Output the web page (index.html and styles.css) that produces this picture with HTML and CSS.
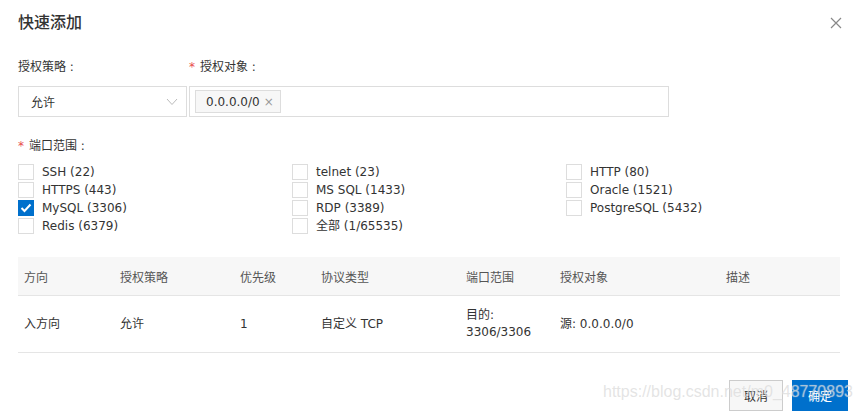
FILE: index.html
```html
<!doctype html>
<html lang="zh-CN">
  <head>
    <meta charset="UTF-8" />
    <meta name="viewport" content="width=device-width, initial-scale=1.0" />
    <title>快速添加</title>
    <link rel="stylesheet" href="styles.css">
  </head>
  <body>
    <div class="dialog">
      <div class="dialog-header">
        <h2>快速添加</h2>
        <button class="close-button" aria-label="关闭">
          <svg width="12" height="12" viewBox="0 0 12 12">
            <path d="M1 1L11 11M11 1L1 11" stroke="#888" stroke-width="1.2" fill="none" />
          </svg>
        </button>
      </div>

      <div class="form-row">
        <div class="field policy-field">
          <div class="field-label">授权策略 :</div>
          <div class="select">
            <span>允许</span>
            <svg width="12" height="8" viewBox="0 0 12 8">
              <path d="M1 1L6 6.5L11 1" stroke="#bbb" stroke-width="1" fill="none" />
            </svg>
          </div>
        </div>
        <div class="field target-field">
          <div class="field-label"><span class="required">*</span>授权对象 :</div>
          <div class="tag-input">
            <span class="tag">0.0.0.0/0 <span class="tag-close">×</span></span>
          </div>
        </div>
      </div>

      <div class="field-label port-label"><span class="required">*</span>端口范围 :</div>
      <div class="port-grid" id="portGrid"></div>

      <table class="rule-table">
        <colgroup>
          <col style="width: 96px" />
          <col style="width: 120px" />
          <col style="width: 81px" />
          <col style="width: 145px" />
          <col style="width: 94px" />
          <col style="width: 166px" />
          <col />
        </colgroup>
        <thead>
          <tr>
            <th>方向</th>
            <th>授权策略</th>
            <th>优先级</th>
            <th>协议类型</th>
            <th>端口范围</th>
            <th>授权对象</th>
            <th>描述</th>
          </tr>
        </thead>
        <tbody>
          <tr>
            <td>入方向</td>
            <td>允许</td>
            <td>1</td>
            <td>自定义 TCP</td>
            <td>目的:<br />3306/3306</td>
            <td>源: 0.0.0.0/0</td>
            <td></td>
          </tr>
        </tbody>
      </table>

      <div class="dialog-footer">
        <button class="btn">取消</button>
        <button class="btn btn-primary">确定</button>
      </div>

      <div class="watermark">https://blog.csdn.net/m0_48770893</div>
    </div>

    <script>
      // ports laid out column by column, like the console does
      const ports = [
        ["SSH (22)", "HTTPS (443)", "MySQL (3306)", "Redis (6379)"],
        ["telnet (23)", "MS SQL (1433)", "RDP (3389)", "全部 (1/65535)"],
        ["HTTP (80)", "Oracle (1521)", "PostgreSQL (5432)"],
      ];
      const checked = ["MySQL (3306)"];

      const grid = document.getElementById("portGrid");
      grid.innerHTML = ports
        .map(
          (col) => `
            <div class="port-col">
              ${col
                .map(
                  (name) => `
                  <label class="checkbox ${checked.includes(name) ? "checked" : ""}">
                    <span class="box">
                      <svg width="12" height="10" viewBox="0 0 12 10">
                        <path d="M1.5 5L4.5 8L10.5 1.5" stroke="#fff" stroke-width="2" fill="none" />
                      </svg>
                    </span>
                    <span>${name}</span>
                  </label>`,
                )
                .join("")}
            </div>`,
        )
        .join("");
    </script>
  </body>
</html>
```

FILE: styles.css
```css
body {
  font-family: "DejaVu Sans", "Noto Sans CJK SC", sans-serif;
  margin: 0;
  background: white;
  color: #333;
  font-size: 12px;
}

.dialog {
  position: relative;
  width: 860px;
  height: 418px;
  padding: 0 12px 0 18px;
  box-sizing: border-box;
  overflow: hidden;
}

.dialog-header {
  display: flex;
  justify-content: space-between;
  align-items: center;
  height: 46px;
}

.dialog-header h2 {
  margin: 0;
  font-size: 16px;
  font-weight: 500;
  line-height: 22px;
  color: #333;
}

.close-button {
  border: none;
  background: none;
  padding: 0;
  margin-right: 6px;
  cursor: pointer;
  display: flex;
}

.form-row {
  display: flex;
  gap: 2px;
  margin-top: 12px;
}

.field-label {
  line-height: 18px;
  height: 18px;
  margin-bottom: 10px;
}

.required {
  color: #e84c4c;
  margin-right: 5px;
}

.policy-field {
  width: 169px;
}

.select {
  height: 31px;
  box-sizing: border-box;
  border: 1px solid #ddd;
  display: flex;
  justify-content: space-between;
  align-items: center;
  padding: 0 8px 0 12px;
}

.target-field {
  width: 480px;
}

.tag-input {
  height: 31px;
  box-sizing: border-box;
  border: 1px solid #ddd;
  display: flex;
  align-items: center;
  padding-left: 5px;
}

.tag {
  height: 23px;
  box-sizing: border-box;
  border: 1px solid #ddd;
  background: #f7f7f7;
  padding: 0 6px 0 10px;
  display: flex;
  align-items: center;
  gap: 4px;
}

.tag-close {
  color: #999;
  font-size: 12px;
}

.port-label {
  margin-top: 20px;
  margin-bottom: 9px;
}

.port-grid {
  display: grid;
  grid-template-columns: 274px 274px 274px;
}

.port-col {
  display: flex;
  flex-direction: column;
  gap: 2px;
}

.checkbox {
  display: flex;
  align-items: center;
  gap: 8px;
  height: 16px;
  line-height: 16px;
}

.box {
  width: 16px;
  height: 16px;
  box-sizing: border-box;
  border: 1px solid #ddd;
  background: white;
  display: flex;
  align-items: center;
  justify-content: center;
}

.box svg {
  display: none;
}

.checkbox.checked .box {
  background: #0070cc;
  border-color: #0070cc;
}

.checkbox.checked .box svg {
  display: block;
}

.rule-table {
  width: 822px;
  margin-top: 23px;
  border-collapse: collapse;
  table-layout: fixed;
}

.rule-table th {
  background: #f7f7f7;
  font-weight: normal;
  text-align: left;
  color: #555;
  height: 38px;
  padding: 0 6px;
  border-bottom: 1px solid #e5e5e5;
}

.rule-table td {
  height: 56px;
  padding: 0 6px;
  line-height: 17px;
  border-bottom: 1px solid #e5e5e5;
}

.dialog-footer {
  display: flex;
  justify-content: flex-end;
  gap: 9px;
  margin-top: 27px;
}

.btn {
  height: 31px;
  padding: 0 14px;
  border: 1px solid #ccc;
  background: #f7f7f7;
  color: #333;
  font-family: inherit;
  font-size: 12px;
  cursor: pointer;
}

.btn-primary {
  background: #0070cc;
  border-color: #0070cc;
  color: white;
  padding: 0 15px;
}

.watermark {
  position: absolute;
  left: 603px;
  top: 383px;
  font-family: "Liberation Sans", sans-serif;
  font-size: 16px;
  color: rgba(205, 205, 205, 0.55);
  text-shadow: 0 0 1px rgba(255, 255, 255, 0.6);
  pointer-events: none;
  white-space: nowrap;
}
```
